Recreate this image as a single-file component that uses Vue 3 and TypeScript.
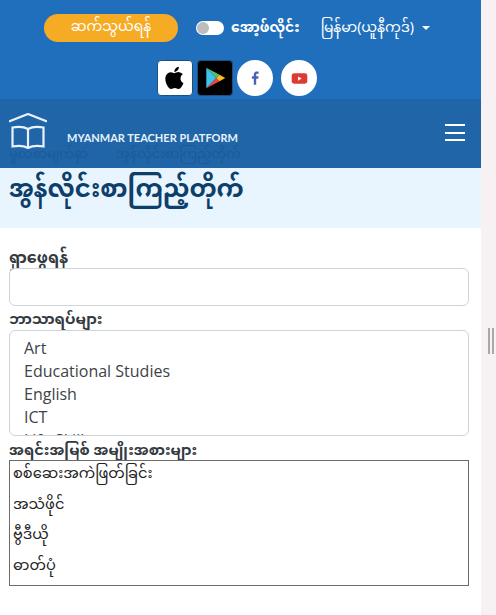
<template>
  <div class="page">
    <main class="main">
      <header class="topbar">
        <div class="topbar__row">
          <a class="contact">ဆက်သွယ်ရန်</a>
          <span class="toggle"><i class="toggle__knob" /></span>
          <span class="offline">အော့ဖ်လိုင်း</span>
          <span class="lang">မြန်မာ(ယူနီကုဒ်)<i class="lang__caret" /></span>
        </div>
        <div class="topbar__icons">
          <span class="store store--apple">
            <svg viewBox="0 0 24 24" width="26" height="26">
              <path fill="#000" d="M17.05 12.54c-.03-2.6 2.12-3.85 2.22-3.91-1.21-1.77-3.09-2.01-3.76-2.04-1.6-.16-3.12.94-3.93.94-.81 0-2.06-.92-3.39-.89-1.74.03-3.35 1.01-4.25 2.57-1.81 3.14-.46 7.8 1.3 10.35.86 1.25 1.89 2.65 3.24 2.6 1.3-.05 1.79-.84 3.36-.84 1.57 0 2.01.84 3.39.81 1.4-.02 2.28-1.27 3.14-2.53.99-1.45 1.4-2.85 1.42-2.92-.03-.01-2.71-1.04-2.74-4.14zM14.47 4.9c.72-.87 1.2-2.08 1.07-3.28-1.03.04-2.28.69-3.02 1.55-.66.77-1.24 2-1.09 3.18 1.15.09 2.33-.58 3.04-1.45z" />
            </svg>
          </span>
          <span class="store store--play">
            <svg viewBox="0 0 24 24" width="26" height="26">
              <path fill="#3ec4ea" d="M4 2.5v19L13.2 12z" />
              <path fill="#4fc17a" d="M4 2.5 13.2 12l3-3z" />
              <path fill="#e8483f" d="M4 21.5 13.2 12l3 3z" />
              <path fill="#fbbc1f" d="m16.2 9-3 3 3 3 5.3-3z" />
            </svg>
          </span>
          <span class="social">
            <svg viewBox="0 0 24 24" width="18" height="18">
              <path fill="#4a62b4" d="M13.6 21v-8h2.7l.4-3.2h-3.1V7.9c0-.9.3-1.5 1.6-1.5h1.6V3.5c-.3 0-1.3-.1-2.4-.1-2.4 0-4 1.4-4 4.1v2.3H7.8V13h2.6v8z" />
            </svg>
          </span>
          <span class="social social--last">
            <svg viewBox="0 0 24 24" width="17" height="17">
              <rect x="1" y="4.5" width="22" height="15" rx="3.5" fill="#dc3b32" />
              <path fill="#fff" d="m10 9 5 3-5 3z" />
            </svg>
          </span>
        </div>
      </header>

      <div class="navwrap">
        <nav class="crumbs">
          <span>မူလစာမျက်နှာ</span>
          <span>အွန်လိုင်းစာကြည့်တိုက်</span>
        </nav>
        <div class="navbar">
          <svg class="logo" viewBox="0 0 38 36" width="38" height="36" fill="none" stroke="#e9f2fa" stroke-width="2.2">
            <path d="M0 8.5 19 1l19 7.500" />
            <path d="M3.500 14.500v19c6-1.200 11.500-.8 15.500 1.500 4-2.300 9.500-2.700 15.500-1.500v-19c-6-1.200-11.500-.8-15.500 1.500-4-2.300-9.500-2.700-15.500-1.500z" />
            <path d="M19 16v19" />
          </svg>
          <span class="brand">MYANMAR TEACHER PLATFORM</span>
          <span class="burger"><i /><i /><i /></span>
        </div>
      </div>

      <section class="hero">
        <h1>အွန်လိုင်းစာကြည့်တိုက်</h1>
      </section>

      <form class="filters">
        <label class="filters__label filters__label--search">ရှာဖွေရန်</label>
        <input class="field" type="text" />

        <label class="filters__label filters__label--subject">ဘာသာရပ်များ</label>
        <div class="list list--subjects">
          <div v-for="subject in subjects" :key="subject" class="list__item">{{ subject }}</div>
        </div>

        <label class="filters__label filters__label--type">အရင်းအမြစ် အမျိုးအစားများ</label>
        <div class="list list--types">
          <div v-for="type in types" :key="type" class="list__type">{{ type }}</div>
        </div>
      </form>
    </main>
    <aside class="gutter">
      <span class="gutter__grip"><i /><i /></span>
    </aside>
  </div>
</template>

<script setup lang="ts">
const subjects: string[] = ['Art', 'Educational Studies', 'English', 'ICT', 'Life Skills']

const types: string[] = ['စစ်ဆေးအကဲဖြတ်ခြင်း', 'အသံဖိုင်', 'ဗွီဒီယို', 'ဓာတ်ပုံ']
</script>

<style>
html,
body {
  margin: 0;
  background: #fff;
  overflow: hidden;
}
</style>

<style scoped>
.page {
  display: flex;
  width: 496px;
  height: 615px;
  overflow: hidden;
  font-family: "Noto Sans Myanmar", "Padauk", "Open Sans", "Noto Sans", sans-serif;
  color: #343a40;
}

.main {
  width: 481px;
  flex: none;
}

.gutter {
  flex: 1;
  background: #f7f1f3;
  padding: 328px 0 0 7px;
}

.gutter__grip {
  display: flex;
  gap: 2px;
}

.gutter__grip i {
  width: 2px;
  height: 26px;
  background: #a9a7a9;
}

.topbar {
  height: 99px;
  background: #1f6fbd;
  box-sizing: border-box;
  padding-top: 14px;
}

.topbar__row {
  display: flex;
  align-items: center;
  height: 28px;
  padding-left: 44px;
  color: #fff;
}

.contact {
  width: 134px;
  height: 28px;
  line-height: 28px;
  text-align: center;
  border-radius: 14px;
  background: #f6ab24;
  font-size: 14px;
}

.toggle {
  width: 28px;
  height: 14px;
  margin-left: 18px;
  border-radius: 7px;
  background: #fff;
  display: flex;
  align-items: center;
  padding-left: 1px;
  box-sizing: border-box;
}

.toggle__knob {
  width: 12px;
  height: 12px;
  border-radius: 50%;
  background: #bdbdbd;
}

.offline {
  margin-left: 7px;
  font-size: 14px;
  font-weight: 700;
}

.lang {
  margin-left: 21px;
  font-size: 14px;
  display: inline-flex;
  align-items: center;
}

.lang__caret {
  margin-left: 8px;
  border-top: 4px solid #fff;
  border-left: 4px solid transparent;
  border-right: 4px solid transparent;
}

.topbar__icons {
  display: flex;
  align-items: center;
  gap: 4px;
  margin-top: 18px;
  padding-left: 157px;
}

.store {
  width: 36px;
  height: 36px;
  box-sizing: border-box;
  border-radius: 4px;
  display: flex;
  align-items: center;
  justify-content: center;
  border: 1px solid #1d4f80;
}

.store--apple {
  background: #fff;
}

.store--play {
  background: #000;
}

.social {
  width: 36px;
  height: 36px;
  border-radius: 50%;
  background: #fff;
  display: flex;
  align-items: center;
  justify-content: center;
}

.social--last {
  margin-left: 4px;
}

.navwrap {
  position: relative;
  height: 69px;
  background: #2065a8;
}

.navbar {
  height: 100%;
  display: flex;
  align-items: flex-start;
  background: rgba(32, 101, 168, 0.72);
  position: relative;
  box-sizing: border-box;
  padding: 14px 16px 0 9px;
}

.logo {
  flex: none;
}

.brand {
  margin: 18px 0 0 20px;
  color: #e6f1fb;
  font-family: Lato, "Open Sans", sans-serif;
  font-size: 11px;
  font-weight: 700;
  line-height: 14px;
  flex: 1;
}

.burger {
  display: flex;
  flex-direction: column;
  gap: 5.500px;
  margin-top: 11px;
}

.burger i {
  display: block;
  width: 20px;
  height: 2px;
  background: #fff;
}

.crumbs {
  position: absolute;
  left: 9px;
  top: 44px;
  display: flex;
  gap: 28px;
  font-size: 13px;
  color: #0f3f6e;
  line-height: 24px;
}

.hero {
  height: 60px;
  background: #e9f5fe;
  padding: 0 9px;
  box-sizing: border-box;
}

.hero h1 {
  margin: 0;
  font-size: 24.500px;
  font-weight: 700;
  line-height: 48px;
  color: #0e3f6b;
}

.filters {
  display: flex;
  flex-direction: column;
  padding: 0 12px 0 9px;
}

.filters__label {
  font-size: 15px;
  font-weight: 700;
  line-height: 20px;
}

.filters__label--search {
  font-size: 16px;
  margin-top: 22px;
  height: 18px;
}

.filters__label--subject {
  margin-top: 5px;
  height: 19px;
}

.filters__label--type {
  font-size: 14.700px;
  margin-top: 6px;
  height: 18px;
}

.field {
  height: 38px;
  box-sizing: border-box;
  border: 1px solid #ced4da;
  border-radius: 6px;
  background: #fff;
}

.list {
  box-sizing: border-box;
  background: #fff;
  overflow: hidden;
}

.list--subjects {
  height: 106px;
  border: 1px solid #ced4da;
  border-radius: 6px;
  padding: 6px 14px;
  font-family: "Open Sans", sans-serif;
  font-size: 16px;
  line-height: 23px;
  color: #3d4349;
}

.list--types {
  height: 126px;
  border: 1px solid #6b6b6b;
  padding: 0 3px;
  font-size: 14.600px;
  color: #222;
}

.list__type {
  height: 30.500px;
  line-height: 28px;
}
</style>
